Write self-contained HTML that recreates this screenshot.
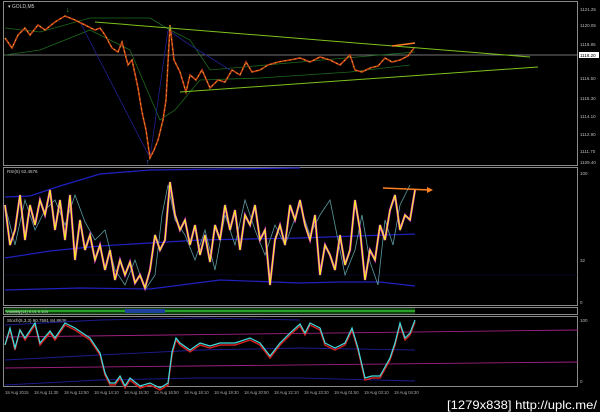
<!DOCTYPE html>
<html><head><style>
html,body{margin:0;padding:0;background:#000;width:600px;height:412px;overflow:hidden}
svg{display:block}
text{font-family:"Liberation Sans",sans-serif}
</style></head><body>
<svg width="600" height="412" viewBox="0 0 600 412">
<rect width="600" height="412" fill="#000"/>
<g stroke="#8a8a8a" stroke-width="1" fill="none">
<rect x="3.5" y="1.5" width="574" height="164"/>
<rect x="3.5" y="167.5" width="574" height="138"/>
<rect x="3.5" y="307.5" width="574" height="7"/>
<rect x="3.5" y="316.5" width="574" height="70"/>
</g>
<line x1="3" y1="55" x2="578" y2="55" stroke="#999" stroke-width="0.8"/>
<g fill="#bbb" font-size="4.5">
<text x="580" y="11">1121.25</text><text x="580" y="27">1120.05</text>
<text x="580" y="46">1118.85</text><text x="580" y="80">1116.50</text>
<text x="580" y="100">1115.30</text><text x="580" y="118">1114.10</text>
<text x="580" y="136">1112.90</text><text x="580" y="153">1111.70</text>
<text x="580" y="164">1109.40</text>
<text x="580" y="175">100</text><text x="580" y="262">32</text><text x="580" y="304">0</text>
<text x="580" y="322">100</text><text x="580" y="383">0</text>
</g>
<rect x="579" y="52" width="20" height="6" fill="#fff"/>
<text x="580" y="57" font-size="4.5" fill="#000">1118.20</text>
<text x="8" y="8" font-size="5" fill="#ccc">▾ GOLD,M5</text>
<text x="7" y="173" font-size="4.5" fill="#ccc">RSI(5) 62.4576</text>
<text x="7" y="322" font-size="4.5" fill="#ccc">Stoch(5,3,3) 90.7591 84.8636</text>
<g fill="none" stroke="#1d6a1d" stroke-width="0.8">
<polyline points="5,28 40,32 90,18 150,18 170,30 190,40 210,70 300,62 380,55 415,52"/>
<polyline points="5,55 40,50 90,30 130,50 160,120 175,110 200,80 260,78 350,72 410,65"/>
</g>
<polyline points="80,22 150,158 168,30 190,45 230,70" fill="none" stroke="#202090" stroke-width="0.8"/>
<polyline points="5,38 12,48 18,35 25,28 30,35 38,25 45,30 55,22 65,16 75,20 85,25 95,30 100,28 105,35 112,48 118,52 122,42 128,65 132,60 138,88 142,112 146,130 150,158 154,150 158,140 163,120 166,100 170,25 174,60 180,72 186,92 190,75 196,80 202,70 210,88 218,80 225,82 232,70 240,75 246,62 252,72 260,70 268,65 278,62 290,60 300,58 310,62 320,57 330,60 340,65 350,55 355,70 362,72 370,68 378,66 385,58 392,62 400,60 408,56 414,48" fill="none" stroke="#c8401a" stroke-width="1.6"/>
<polyline points="5,38 12,48 18,35 25,28 30,35 38,25 45,30 55,22 65,16 75,20 85,25 95,30 100,28 105,35 112,48 118,52 122,42 128,65 132,60 138,88 142,112 146,130 150,158 154,150 158,140 163,120 166,100 170,25 174,60 180,72 186,92 190,75 196,80 202,70 210,88 218,80 225,82 232,70 240,75 246,62 252,72 260,70 268,65 278,62 290,60 300,58 310,62 320,57 330,60 340,65 350,55 355,70 362,72 370,68 378,66 385,58 392,62 400,60 408,56 414,48" fill="none" stroke="#e8c020" stroke-width="0.8" stroke-dasharray="1.5 3.5"/>
<g stroke="#7cc21e" stroke-width="1">
<line x1="95" y1="22" x2="530" y2="57"/>
<line x1="180" y1="92" x2="538" y2="67"/>
</g>
<line x1="392" y1="46" x2="415" y2="43" stroke="#ff8020" stroke-width="1.5"/>
<text x="66" y="12" font-size="7" fill="#3c3">↓</text>
<text x="146" y="164" font-size="7" fill="#48f">↑</text>
<text x="168" y="30" font-size="7" fill="#3c3">+</text>
<g fill="none" stroke="#2020c0" stroke-width="1.2">
<polyline points="5,197 30,196 60,186 100,174 150,170 300,168"/>
<polyline points="5,258 50,251 100,246 200,240 300,238 415,234"/>
<polyline points="5,290 80,288 150,289 220,280 300,283 340,282 380,282 415,286"/>
</g>
<line x1="5" y1="275" x2="578" y2="275" stroke="#1a1a70" stroke-width="0.6" stroke-dasharray="1 1"/>
<polyline points="5,205 15,245 25,200 35,230 45,210 55,200 65,225 75,195 85,222 95,240 105,230 115,270 125,285 135,260 145,290 155,275 162,215 168,185 175,220 185,235 195,260 205,230 215,270 225,215 235,245 245,200 255,230 265,255 275,225 285,245 300,205 310,235 320,215 330,200 345,275 355,250 362,215 370,262 378,285 385,220 393,245 400,205 410,185" fill="none" stroke="#5a9aa0" stroke-width="0.8"/>
<polyline points="5,205 10,245 15,230 20,195 25,240 30,205 35,225 40,200 45,215 50,190 55,230 60,200 65,240 70,195 75,260 80,220 85,250 90,235 95,260 100,245 105,270 110,250 115,280 120,260 125,275 130,262 135,283 140,275 145,288 150,270 155,235 160,250 165,240 170,182 175,215 180,230 185,220 190,245 195,225 200,255 205,235 210,262 215,225 220,240 225,205 230,230 235,210 240,250 245,215 250,225 255,205 260,240 265,230 270,285 275,240 280,225 285,245 290,205 295,220 300,200 305,225 310,240 315,215 320,275 325,245 330,255 335,270 340,235 345,265 350,250 355,200 360,230 365,280 370,250 375,260 380,225 385,240 390,210 395,195 400,230 405,215 410,220 415,190" fill="none" stroke="#e030e0" stroke-width="2.2"/>
<polyline points="5,205 10,245 15,230 20,195 25,240 30,205 35,225 40,200 45,215 50,190 55,230 60,200 65,240 70,195 75,260 80,220 85,250 90,235 95,260 100,245 105,270 110,250 115,280 120,260 125,275 130,262 135,283 140,275 145,288 150,270 155,235 160,250 165,240 170,182 175,215 180,230 185,220 190,245 195,225 200,255 205,235 210,262 215,225 220,240 225,205 230,230 235,210 240,250 245,215 250,225 255,205 260,240 265,230 270,285 275,240 280,225 285,245 290,205 295,220 300,200 305,225 310,240 315,215 320,275 325,245 330,255 335,270 340,235 345,265 350,250 355,200 360,230 365,280 370,250 375,260 380,225 385,240 390,210 395,195 400,230 405,215 410,220 415,190" fill="none" stroke="#f4f020" stroke-width="1.2"/>
<line x1="383" y1="188" x2="430" y2="190" stroke="#ff8020" stroke-width="1.5"/>
<polygon points="427,187 433,190 427,193" fill="#ff8020"/>
<rect x="5" y="308" width="410" height="6" fill="#104010"/>
<line x1="5" y1="311" x2="415" y2="311" stroke="#30c030" stroke-width="1.5"/>
<rect x="125" y="309" width="40" height="4" fill="#2040a0"/>
<text x="6" y="313" font-size="4" fill="#ddd">Volatility(14) 0.01 0.104</text>
<g fill="none" stroke="#a02080" stroke-width="0.9">
<line x1="5" y1="337" x2="578" y2="330"/>
<line x1="5" y1="368" x2="578" y2="362"/>
</g>
<g fill="none" stroke="#1c1c90" stroke-width="0.9">
<polyline points="5,360 100,355 200,350 300,348 415,350"/>
<polyline points="5,385 100,380 200,378 300,378 415,381"/>
<polyline points="5,325 100,320 200,318 300,320"/>
</g>
<polyline points="5,345 10,330 15,350 20,330 25,340 35,325 40,345 50,333 55,340 65,325 75,330 90,340 100,355 105,375 110,385 115,385 120,378 125,388 130,380 140,388 150,385 160,390 168,385 172,355 176,340 180,345 190,352 200,345 210,348 220,345 235,345 250,340 260,345 270,358 280,345 290,335 300,326 305,335 310,325 320,330 325,345 335,350 345,345 352,330 358,350 365,380 372,378 380,378 390,360 395,345 400,325 405,340 410,335 415,322" fill="none" stroke="#d02020" stroke-width="1.5"/>
<polyline points="5,345 10,328 15,348 20,330 25,338 35,323 40,343 50,331 55,338 65,323 75,328 90,338 100,353 105,373 110,383 115,383 120,376 125,386 130,378 140,386 150,383 160,388 168,383 172,352 176,338 180,343 190,350 200,343 210,346 220,343 235,343 250,338 260,343 270,356 280,343 290,333 300,324 305,333 310,323 320,328 325,343 335,348 345,343 352,328 358,348 365,378 372,376 380,376 390,358 395,343 400,323 405,338 410,333 415,320" fill="none" stroke="#40e0e0" stroke-width="1.2"/>
<g fill="#aaa" font-size="4.2">
<text x="5" y="394">18 Aug 2015</text><text x="34" y="394">18 Aug 11:30</text><text x="64" y="394">18 Aug 12:50</text>
<text x="94" y="394">18 Aug 14:10</text><text x="124" y="394">18 Aug 15:30</text><text x="154" y="394">18 Aug 16:50</text>
<text x="184" y="394">18 Aug 18:10</text><text x="214" y="394">18 Aug 19:30</text><text x="244" y="394">18 Aug 20:50</text>
<text x="274" y="394">18 Aug 22:10</text><text x="304" y="394">18 Aug 23:30</text><text x="334" y="394">19 Aug 01:50</text>
<text x="364" y="394">19 Aug 03:10</text><text x="394" y="394">19 Aug 04:30</text>
</g>
<text x="447" y="409" font-size="12" fill="#fff" font-family="Liberation Sans Narrow,Liberation Sans,sans-serif" textLength="150" lengthAdjust="spacingAndGlyphs">[1279x838] http://uplc.me/</text>
</svg>
</body></html>
